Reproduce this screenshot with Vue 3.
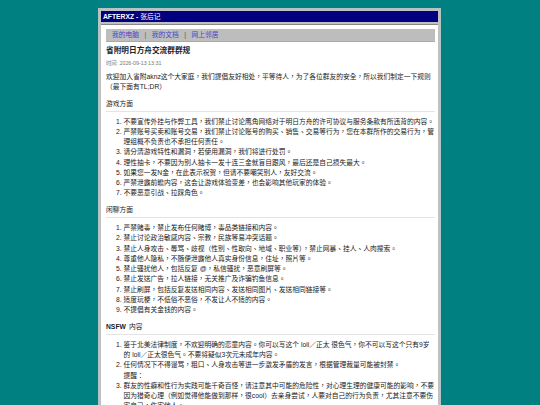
<script setup>
const sections = [
  { title: '游戏方面', items: [
    '不要宣传外挂与作弊工具，我们禁止讨论鹰角网络对于明日方舟的许可协议与服务条款有所违背的内容。',
    '严禁账号买卖和账号交易，我们禁止讨论账号的购买、销售、交易等行为，您在本群所作的交易行为，管理组概不负责也不承担任何责任。',
    '请分清游戏特性和漏洞，若使用漏洞，我们将进行处罚。',
    '理性抽卡，不要因为别人抽卡一发十连三金就盲目跟风，最后还是自己损失最大。',
    '如果您一发N金，在此表示祝贺，但请不要嘲笑别人，友好交流。',
    '严禁泄露前瞻内容，这会让游戏体验变差，也会影响其他玩家的体验。',
    '不要恶意引战、拉踩角色。'
  ]},
  { title: '闲聊方面', items: [
    '严禁赌毒，禁止发布任何赌博，毒品类链接和内容。',
    '禁止讨论政治敏感内容、宗教，民族等易冲突话题。',
    '禁止人身攻击、辱骂、歧视（性别、性取向、地域、职业等），禁止网暴、挂人、人肉搜索。',
    '尊重他人隐私，不随便泄露他人真实身份信息，住址，照片等。',
    '禁止骚扰他人，包括反复 @，私信骚扰，恶意刷屏等。',
    '禁止发送广告，拉人链接，无关推广及诈骗钓鱼信息。',
    '禁止刷屏，包括反复发送相同内容、发送相同图片、发送相同链接等。',
    '适度玩梗，不低俗不恶俗，不发让人不适的内容。',
    '不提倡有关金钱的内容。'
  ]},
  { title: '内容', bold: 'NSFW', items: [
    '鉴于北美法律制度，不欢迎明确的恋童内容。你可以写这个 loli／正太 很色气，你不可以写这个只有9岁的 loli／正太很色气。不要将疑似3次元未成年内容。',
    '任何情况下不得谩骂，粗口、人身攻击等进一步激发矛盾的发言，根据管理裁量可能被封禁。<br>提醒：',
    '群友的性癖和性行为实践可能千奇百怪，请注意其中可能的危险性，对心理生理的健康可能的影响，不要因为猎奇心理（例如觉得他能做到那样，很cool）去亲身尝试，人要对自己的行为负责，尤其注意不要伤害自己，伤害他人。'
  ]}
]
const links = ['我的电脑', '我的文档', '网上邻居']
</script>

<template>
  <div class="desktop">
    <div class="window">
      <div class="titlebar"><b>AFTERXZ</b> <b>-</b> 张后记</div>
      <div class="content">
        <nav class="nav">
          <template v-for="(l, i) in links" :key="l">
            <span v-if="i" class="sep">|</span>
            <a>{{ l }}</a>
          </template>
        </nav>
        <h1>省附明日方舟交流群群规</h1>
        <div class="meta">时间: 2026-09-13 13:31</div>
        <p class="intro">欢迎加入省附aknz这个大家庭，我们提倡友好相处，平等待人，为了各位群友的安全，所以我们制定一下规则（最下面有TL;DR）</p>
        <section v-for="s in sections" :key="s.title">
          <h2><b v-if="s.bold" class="strong">{{ s.bold }}</b>{{ s.title }}</h2>
          <ol>
            <li v-for="it in s.items" :key="it" v-html="it"></li>
          </ol>
        </section>
      </div>
    </div>
  </div>
</template>

<style>
html, body { margin: 0; height: 100%; overflow: hidden; background: #008080; }
</style>
<style scoped>
.desktop {
  height: 405px;
  overflow: hidden;
  padding: 8px 0 0 98px;
  box-sizing: border-box;
  font-family: "Liberation Sans", "Noto Sans CJK TC", sans-serif;
  font-size: 6.75px;
  line-height: 10.25px;
  color: #1a1a1a;
}
.window {
  width: 343px;
  box-sizing: border-box;
  background: #c0c0c0;
  border: 1px solid #b4c4c4;
  padding: 2px;
}
.titlebar {
  height: 11px;
  line-height: 11px;
  background: #000080;
  color: #fff;
  padding: 0 2px;
  margin-bottom: 2px;
}
.content {
  background: #fff;
  border-top: 1px solid #888;
  padding: 4px 3.5px 0 5px;
}
.nav {
  background: #bdbdbd;
  height: 13px;
  line-height: 12px;
  padding: 0 6px;
  color: #555;
  border-bottom: 1px solid #aaa;
  box-sizing: border-box;
}
.nav a { color: #4545c8; }
.sep { margin: 0 5.5px; }
h1 { font-size: 7.67px; line-height: 10px; margin: 3.5px 0 0; color: #222; }
.meta { font-size: 5.3px; line-height: 8px; color: #777; margin-top: 3px; }
.intro { margin: 5px 0 0; }
h2 { font-size: 6.75px; font-weight: 400; line-height: 10px; margin: 6.5px 0 0; padding-bottom: 2px; border-bottom: 1px solid #e4e4e4; }
.strong { margin-right: 3px; }
ol { margin: 5px 0 0; padding: 0 0 0 17.5px; }
</style>
